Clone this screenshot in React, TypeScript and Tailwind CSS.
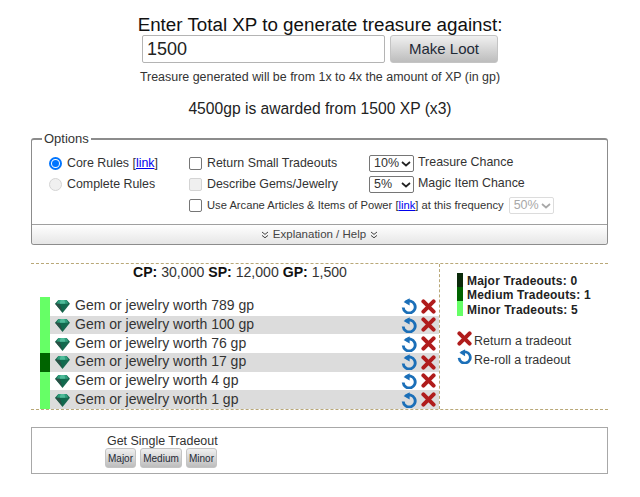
import React from 'react';

type Row = { worth: number; bar: string };

const ROWS: Row[] = [
  { worth: 789, bar: 'bg-[#66ff66]' },
  { worth: 100, bar: 'bg-[#66ff66]' },
  { worth: 76, bar: 'bg-[#66ff66]' },
  { worth: 17, bar: 'bg-[#006400]' },
  { worth: 4, bar: 'bg-[#66ff66]' },
  { worth: 1, bar: 'bg-[#66ff66]' },
];

const BUTTON = 'rounded-[3px] border border-[#c4c4c4] bg-gradient-to-b from-[#f0f0f0] to-[#bdbdbd] text-[#1f2a36]';

function Gem() {
  return (
    <svg width="15" height="14" viewBox="0 0 16 15" className="shrink-0" aria-hidden="true">
      <path d="M3.5 1h9L16 5l-8 10L0 5z" fill="#17694f" />
      <path d="M3.5 1h9L14 5H2z" fill="#2f9c7b" />
      <path d="M5 5h6L8 14z" fill="#0f6a4d" />
      <path d="M0 5h5l3 9z" fill="#2a4f45" />
      <path d="M6 1h4l1 4H5z" fill="#4fbb99" />
    </svg>
  );
}

function Reroll({ size = 16 }: { size?: number }) {
  return (
    <svg width={size} height={size} viewBox="0 0 16 16" className="shrink-0" aria-hidden="true">
      <path d="M4.6 4.2A6 6 0 1 1 2.2 9.5" fill="none" stroke="#1b6fb8" strokeWidth="2.9" />
      <path d="M8.6 0.2v7.4L2.6 3.9z" fill="#1b6fb8" />
    </svg>
  );
}

function Cross({ size = 15 }: { size?: number }) {
  return (
    <svg width={size} height={size} viewBox="0 0 15 15" className="shrink-0" aria-hidden="true">
      <path d="M2.4 2.4l10.2 10.2M12.6 2.4L2.4 12.6" stroke="#b01c1c" strokeWidth="4" strokeLinecap="round" />
    </svg>
  );
}

function Select({ value, disabled, width }: { value: string; disabled?: boolean; width: string }) {
  return (
    <span
      className={`flex h-[17px] items-center justify-between rounded-[2px] border pl-[4px] pr-[2px] text-[12.5px] ${width} ${
        disabled ? 'border-[#dcdcdc] text-[#a8a8a8]' : 'border-[#767676] text-[#333]'
      }`}
    >
      {value}
      <svg width="10" height="6" viewBox="0 0 10 6" aria-hidden="true">
        <path d="M1 1l4 3.5L9 1" fill="none" stroke={disabled ? '#a8a8a8' : '#222'} strokeWidth="1.7" />
      </svg>
    </span>
  );
}

function Checkbox({ disabled }: { disabled?: boolean }) {
  return (
    <span
      className={`h-[13px] w-[13px] shrink-0 rounded-[2px] border ${
        disabled ? 'border-[#d4d4d4] bg-[#f0f0f0]' : 'border-[#767676] bg-white'
      }`}
    />
  );
}

function Chevrons() {
  return (
    <svg width="8" height="8" viewBox="0 0 8 8" aria-hidden="true">
      <path d="M1 1l3 2.4L7 1M1 4.4l3 2.4 3-2.4" fill="none" stroke="#444" strokeWidth="1" />
    </svg>
  );
}

export default function App() {
  return (
    <div className="h-[497px] w-[640px] overflow-hidden bg-white font-['Liberation_Sans',Arial,sans-serif] text-[#333]">
      <div className="flex flex-col items-center pt-[13px]">
        <h1 className="text-[18.8px] leading-[23px] text-[#111]">Enter Total XP to generate treasure against:</h1>
        <div className="mt-[-1px] flex items-center gap-[5px]">
          <span className="flex h-[28px] w-[243px] items-center rounded-[2px] border border-[#b4b4b4] pl-[4px] text-[18px] text-[#222]">
            1500
          </span>
          <button type="button" className={`h-[28px] w-[108px] text-[15px] ${BUTTON}`}>
            Make Loot
          </button>
        </div>
        <p className="mt-[7px] text-[12.45px] leading-[14px]">Treasure generated will be from 1x to 4x the amount of XP (in gp)</p>
        <p className="mt-[16px] text-[15.65px] leading-[18px] text-[#222]">4500gp is awarded from 1500 XP (x3)</p>
      </div>

      <fieldset className="mx-[31px] mt-[13px] h-[114px] w-[577px] rounded-[3px] border border-[#8c8c8c] border-t-2">
        <legend className="ml-[10px] px-[2px] text-[13px] leading-[15px]">Options</legend>
        <div className="flex h-[78px] pl-[17px] pt-[9px] text-[12.4px] leading-[15px]">
          <div className="flex w-[140px] flex-col gap-[5px]">
            <label className="flex h-[16px] items-center gap-[5px]">
              <span className="flex h-[13px] w-[13px] items-center justify-center rounded-full border-2 border-[#0075ff]">
                <span className="h-[7px] w-[7px] rounded-full bg-[#0075ff]" />
              </span>
              <span>
                Core Rules [<a className="text-[#0000ee] underline">link</a>]
              </span>
            </label>
            <label className="flex h-[16px] items-center gap-[5px]">
              <span className="h-[13px] w-[13px] rounded-full border border-[#d4d4d4] bg-[#f0f0f0]" />
              <span>Complete Rules</span>
            </label>
          </div>
          <div className="flex flex-col gap-[4px]">
            <div className="flex h-[17px] items-center">
              <label className="flex w-[180px] items-center gap-[5px]">
                <Checkbox />
                Return Small Tradeouts
              </label>
              <Select value="10%" width="w-[45px]" />
              <span className="mb-[3px] ml-[4px]">Treasure Chance</span>
            </div>
            <div className="flex h-[17px] items-center">
              <label className="flex w-[180px] items-center gap-[5px]">
                <Checkbox disabled />
                Describe Gems/Jewelry
              </label>
              <Select value="5%" width="w-[45px]" />
              <span className="mb-[3px] ml-[4px]">Magic Item Chance</span>
            </div>
            <div className="flex h-[17px] items-center">
              <label className="flex items-center gap-[5px] text-[11.2px]">
                <Checkbox />
                <span>
                  Use Arcane Articles &amp; Items of Power [<a className="text-[#0000ee] underline">link</a>] at this frequency
                </span>
              </label>
              <span className="ml-[5px]">
                <Select value="50%" disabled width="w-[45px]" />
              </span>
            </div>
          </div>
        </div>
        <div className="flex h-[20px] items-center justify-center gap-[4px] rounded-b-[3px] border-t border-[#a0a0a0] bg-gradient-to-b from-white to-[#e6e6e6] text-[11.5px] text-[#444]">
          <Chevrons />
          Explanation / Help
          <Chevrons />
        </div>
      </fieldset>

      <section className="mx-[31px] mt-[18px] flex h-[147px] w-[577px] border-y border-dashed border-[#b9a878]">
        <div className="w-[409px] border-r border-dashed border-[#b9a878] pl-[9px]">
          <div className="h-[33px] pl-[93px] pt-px text-[14.1px] leading-[15px] text-[#333]">
            <b className="text-[#111]">CP:</b> 30,000 <b className="text-[#111]">SP:</b> 12,000{' '}
            <b className="text-[#111]">GP:</b> 1,500
          </div>
          {ROWS.map((row, i) => (
            <div key={row.worth} className="flex h-[18.67px]">
              <div className={`w-[10px] ${row.bar}`} />
              <div className={`flex flex-1 items-center pl-[5px] pr-[3px] text-[14px] ${i % 2 ? 'bg-[#dcdcdc]' : ''}`}>
                <Gem />
                <span className="mb-px ml-[5px] flex-1">Gem or jewelry worth {row.worth} gp</span>
                <Reroll />
                <span className="ml-[4px]">
                  <Cross />
                </span>
              </div>
            </div>
          ))}
        </div>
        <div className="flex-1 pl-[17px] pt-[9px]">
          <div className="flex gap-[4px]">
            <div className="flex w-[6px] flex-col">
              <div className="h-[14px] bg-[#0a2a0a]" />
              <div className="h-[14px] bg-[#006400]" />
              <div className="h-[15px] bg-[#66ff66]" />
            </div>
            <div className="pt-px text-[12px] font-bold leading-[14.3px] tracking-[0.2px] text-[#222]">
              <div>Major Tradeouts: 0</div>
              <div>Medium Tradeouts: 1</div>
              <div>Minor Tradeouts: 5</div>
            </div>
          </div>
          <div className="mt-[14px] flex flex-col text-[12.5px] leading-[16px]">
            <div className="flex h-[18px] items-start gap-[2px]">
              <Cross />
              <span className="mt-[2px]">Return a tradeout</span>
            </div>
            <div className="flex items-start gap-[2px]">
              <Reroll size={15} />
              <span className="mt-[3px]">Re-roll a tradeout</span>
            </div>
          </div>
        </div>
      </section>

      <section className="mx-[31px] mt-[17px] h-[47px] w-[577px] border border-[#a8a8a8] pl-[73px] pt-[6px]">
        <div className="ml-[2px] text-[12.45px] leading-[14px]">Get Single Tradeout</div>
        <div className="flex gap-[4px]">
          <button type="button" className={`h-[20px] w-[31px] text-[10px] ${BUTTON}`}>
            Major
          </button>
          <button type="button" className={`h-[20px] w-[42px] text-[10px] ${BUTTON}`}>
            Medium
          </button>
          <button type="button" className={`h-[20px] w-[31px] text-[10px] ${BUTTON}`}>
            Minor
          </button>
        </div>
      </section>
    </div>
  );
}
